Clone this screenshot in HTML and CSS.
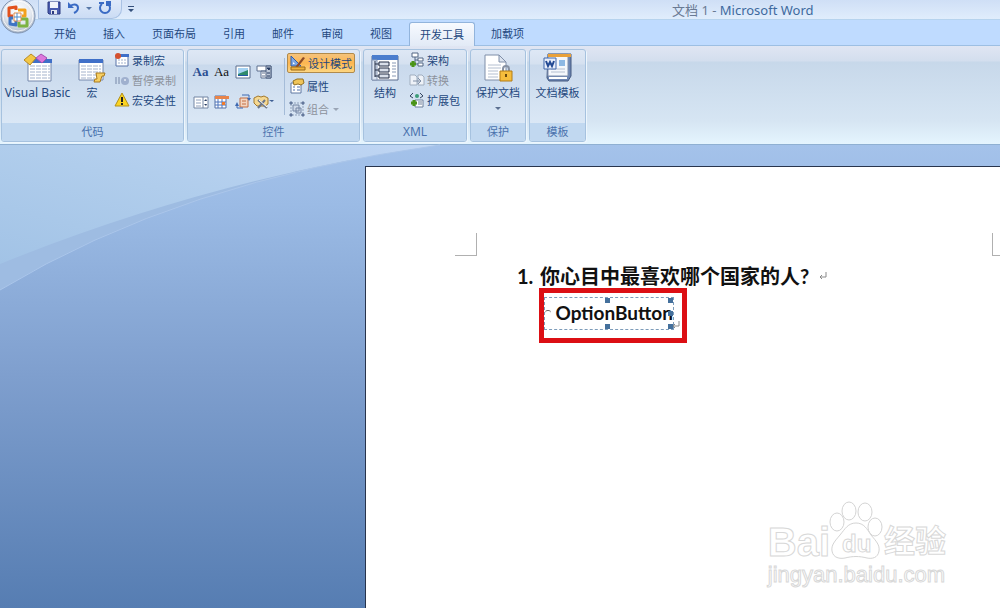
FILE: index.html
```html
<!DOCTYPE html>
<html lang="zh-CN">
<head>
  <meta charset="UTF-8">
  <meta name="viewport" content="width=device-width, initial-scale=1.0">
  <title>文档 1 - Microsoft Word</title>
  <link rel="stylesheet" href="styles.css">
</head>
<body>
  <header class="title-bar">
    <button class="office-button" aria-label="Office">
      <svg width="36" height="36" viewBox="0 0 36 36">
        <defs>
          <radialGradient id="orb" cx="50%" cy="35%" r="65%">
            <stop offset="0" stop-color="#ffffff"/>
            <stop offset="0.6" stop-color="#e3e8ef"/>
            <stop offset="1" stop-color="#a9b5c6"/>
          </radialGradient>
        </defs>
        <circle cx="18" cy="18" r="17" fill="url(#orb)" stroke="#7e92b0"/>
        <circle cx="18" cy="18" r="15" fill="none" stroke="#ffffff" opacity="0.8"/>
        <g fill="none" stroke-width="3" stroke-linejoin="round">
          <path d="M13 18H9v-8l7-1v3" stroke="#e2511b"/>
          <path d="M18 12h7v6h-3" stroke="#f2a11c"/>
          <path d="M13 20h-3v6l6 1v-4" stroke="#3f74c4"/>
          <path d="M21 21h6v7h-8v-4" stroke="#7cb342"/>
        </g>
        <path d="M14 15h7v8h-7z" fill="#fff" stroke="#dd8a4a"/>
        <path d="M17 15v8M14 19h7" stroke="#4c8fd0"/>
      </svg>
    </button>
    <div class="quick-access">
      <button aria-label="保存">
        <svg width="14" height="14" viewBox="0 0 14 14">
          <path d="M1 1h12v12H2l-1-1z" fill="#4a5db0" stroke="#2c3a80"/>
          <path d="M3 1h8v6H3z" fill="#f2f5fc"/>
          <path d="M4 9h6v4H4z" fill="#dfe4f0"/>
          <path d="M5 10h2v3H5z" fill="#2c3a80"/>
        </svg>
      </button>
      <button aria-label="撤消">
        <svg width="13" height="14" viewBox="0 0 13 14">
          <path d="M3 5c5-3 8-1 8 2s-2 4-4 5" fill="none" stroke="#3a6bc4" stroke-width="2"/>
          <path d="M1 1v6h6z" fill="#3a6bc4"/>
        </svg>
      </button>
      <svg class="caret" width="6" height="3" viewBox="0 0 6 3"><path d="M0 0h6L3 3z" fill="#5878a8"/></svg>
      <button aria-label="重复">
        <svg width="14" height="14" viewBox="0 0 14 14">
          <path d="M4 3a5 5 0 1 0 6 0" fill="none" stroke="#3a6bc4" stroke-width="2"/>
          <path d="M8 0h5v5H8z" fill="#3a6bc4"/>
          <path d="M1 2h5" stroke="#3a6bc4" stroke-width="2"/>
        </svg>
      </button>
    </div>
    <button class="customize" aria-label="自定义快速访问工具栏">
      <svg width="6" height="7" viewBox="0 0 6 7"><path d="M0 0h6v1H0zM0 3h6L3 6z" fill="#34507c"/></svg>
    </button>
    <div class="window-title">文档 1 - <span>Microsoft Word</span></div>
  </header>

  <nav class="tabs">
    <button>开始</button>
    <button>插入</button>
    <button>页面布局</button>
    <button>引用</button>
    <button>邮件</button>
    <button>审阅</button>
    <button>视图</button>
    <button class="active">开发工具</button>
    <button>加载项</button>
  </nav>

  <div class="ribbon">
    <section class="group group-code">
      <div class="group-body">
        <button class="big vb">
          <svg width="30" height="30" viewBox="0 0 30 30">
            <path d="M5 7h23v21H5z" fill="#fff" stroke="#7488ac"/>
            <path d="M5 6h24v4H5z" fill="#3f6fc8"/>
            <g stroke="#a3b2cc" stroke-dasharray="5 1"><path d="M7 13h20M7 16h20M7 19h20M7 22h20M7 25h20"/></g>
            <path d="M1 7l7-6 5 4-6 7z" fill="#f3c746" stroke="#b98a22"/>
            <path d="M13 5l5-4 6 4-5 5z" fill="#dc78dc" stroke="#a64fb0"/>
          </svg>
          <span class="latin">Visual Basic</span>
        </button>
        <button class="big macro">
          <svg width="30" height="30" viewBox="0 0 30 30">
            <path d="M2 7h24v20H2z" fill="#fff" stroke="#7488ac"/>
            <path d="M2 6h24v4H2z" fill="#3f6fc8"/>
            <g stroke="#a3b2cc" stroke-dasharray="5 1"><path d="M4 13h20M4 16h20M4 19h20M4 22h20M4 25h14"/></g>
            <path d="M19 20h9l-1 3h-2l-2 6h-6l1-3h2z" fill="#f7cf62" stroke="#a97a1c"/>
          </svg>
          <span>宏</span>
        </button>
        <div class="column">
          <button class="small">
            <svg width="16" height="16" viewBox="0 0 16 16">
              <path d="M2 3h12v11H2z" fill="#fff" stroke="#5873a8"/>
              <path d="M6 2h9v3H6z" fill="#3f6fc8"/>
              <path d="M4 8h9M4 11h9" stroke="#9fb0cc" stroke-dasharray="2 1"/>
              <circle cx="4" cy="4" r="3" fill="#d4502e"/>
            </svg>
            录制宏
          </button>
          <button class="small" disabled>
            <svg width="16" height="16" viewBox="0 0 16 16">
              <path d="M2 5v7M5 5v7" stroke="#a2b2cb" stroke-width="2"/>
              <circle cx="11" cy="9" r="4" fill="#9fb0ce"/>
              <circle cx="11" cy="8" r="1" fill="#e4ebf6"/>
            </svg>
            暂停录制
          </button>
          <button class="small">
            <svg width="16" height="16" viewBox="0 0 16 16">
              <path d="M8 1l7 13H1z" fill="#fbd423" stroke="#b2901c" stroke-linejoin="round"/>
              <path d="M8 5v5M8 11v2" stroke="#222" stroke-width="2"/>
            </svg>
            宏安全性
          </button>
        </div>
      </div>
      <h2>代码</h2>
    </section>

    <section class="group group-controls">
      <div class="group-body">
        <div class="control-grid">
          <button class="rich">Aa</button>
          <button class="plain">Aa</button>
          <button aria-label="图片">
            <svg width="16" height="16" viewBox="0 0 16 16">
              <path d="M1 2h14v12H1z" fill="#fff" stroke="#5c6f8e"/>
              <path d="M3 4h10v8H3z" fill="#a5d2f2"/>
              <path d="M3 10l5-2 5-2v6H3z" fill="#2f8a6c"/>
              <path d="M3 11h10v1H3z" fill="#2456a8"/>
            </svg>
          </button>
          <button aria-label="组合框">
            <svg width="16" height="16" viewBox="0 0 16 16">
              <path d="M1 2h14v5H1zM5 7h10v7H5z" fill="#fff" stroke="#5c6f8e"/>
              <path d="M10 2h5v12h-5z" fill="#bcc7d8" stroke="#4a5c7c"/>
              <path d="M11 4h3l-1 2zM11 9h3M11 12h3" fill="#24395f" stroke="#24395f"/>
              <path d="M6 9h3M6 12h3" stroke="#5c6f8e"/>
            </svg>
          </button>
          <button aria-label="下拉列表">
            <svg width="16" height="16" viewBox="0 0 16 16">
              <path d="M1 3h14v11H1z" fill="#fff" stroke="#7385a3"/>
              <path d="M10 3v11" stroke="#7385a3"/>
              <path d="M3 6h5M3 9h5M3 12h5" stroke="#8fa0bc"/>
              <path d="M11 7l2-2 1 2zM11 10h3l-1 2z" fill="#24395f"/>
            </svg>
          </button>
          <button aria-label="日期选取器">
            <svg width="16" height="16" viewBox="0 0 16 16">
              <path d="M1 2h11v12H1z" fill="#fff" stroke="#5470a5"/>
              <path d="M1 2h14v3H1z" fill="#e8844a"/>
              <path d="M1 8h11M1 11h11M4 5v9M8 5v9" stroke="#4d74bd"/>
              <path d="M8 8h3v3H8z" fill="#f07a2b"/>
            </svg>
          </button>
          <button aria-label="构建基块库">
            <svg width="16" height="16" viewBox="0 0 16 16">
              <path d="M5 4h8v9H5z" fill="#f3d6c2" stroke="#c26c42"/>
              <path d="M7 7h4M7 10h4" stroke="#c26c42"/>
              <path d="M7 1h7v4M2 10v4h6" fill="none" stroke="#3e68b0"/>
              <path d="M12 4h4l-2 3zM0 12l2-4 2 4z" fill="#3e68b0"/>
            </svg>
          </button>
          <button aria-label="旧式工具">
            <svg width="21" height="16" viewBox="0 0 21 16">
              <path d="M1 4l4-2 3 1 3-1 4 2v6l-3 2H4l-3-3z" fill="#f5d891" stroke="#a2782c"/>
              <path d="M5 6l9 8M12 6l-7 8" stroke="#6c7688" stroke-width="2"/>
              <path d="M6 6l8 7" stroke="#fff"/>
              <path d="M16 6h5l-2 2z" fill="#3f5f94"/>
            </svg>
          </button>
        </div>
        <div class="column wide">
          <button class="small pressed">
            <svg width="16" height="16" viewBox="0 0 16 16">
              <path d="M1 1v10h10z" fill="#7ea7e2" stroke="#2f5da8"/>
              <path d="M3 7v2h2z" fill="#fff"/>
              <path d="M6 11l7-9 2 1-7 9-3 1z" fill="#8c4a28"/>
              <path d="M1 12h14v3H1z" fill="#f0b23c" stroke="#9a6a1c"/>
            </svg>
            设计模式
          </button>
          <button class="small">
            <svg width="16" height="16" viewBox="0 0 16 16">
              <path d="M2 5h10v10H2z" fill="#fff" stroke="#6078a2"/>
              <path d="M4 9h2M8 9h3M4 12h2M8 12h3" stroke="#4f70ac"/>
              <path d="M4 3l4-2h6l1 4-3 2-3-1-4 1z" fill="#f0c55a" stroke="#93701f"/>
            </svg>
            属性
          </button>
          <button class="small" disabled>
            <svg width="16" height="16" viewBox="0 0 16 16">
              <path d="M2 2h12v12H2z" fill="none" stroke="#91a1ba" stroke-dasharray="2 1"/>
              <path d="M4 4h6v6H4zM7 7h5v5H7z" fill="#cdd8e8" stroke="#7486a4"/>
              <path d="M1 1h2v2H1zM13 1h2v2h-2zM1 13h2v2H1zM13 13h2v2h-2z" fill="#64799c" stroke="#64799c"/>
            </svg>
            组合
            <svg class="caret" width="6" height="3" viewBox="0 0 6 3"><path d="M0 0h6L3 3z" fill="#9aa5b6"/></svg>
          </button>
        </div>
      </div>
      <h2>控件</h2>
    </section>

    <section class="group group-xml">
      <div class="group-body">
        <button class="big structure">
          <svg width="30" height="30" viewBox="0 0 30 30">
            <path d="M2 3h26v24H2z" fill="#fff" stroke="#5c6f90"/>
            <path d="M2 2h26v5H2z" fill="#4b7dcd"/>
            <path d="M2 7h5v20H2zM22 10h4M22 13h4M22 16h4M22 19h4M22 23h4" fill="#dbe4f2" stroke="#8798b5"/>
            <path d="M5 8v16M5 11h4M5 17h4M5 23h4" fill="none" stroke="#222d44"/>
            <path d="M9 9h10v4H9zM9 15h10v4H9zM9 21h10v4H9z" fill="#d9dfe9" stroke="#222d44"/>
          </svg>
          <span>结构</span>
        </button>
        <div class="column">
          <button class="small">
            <svg width="16" height="16" viewBox="0 0 16 16">
              <path d="M3 1h6v4H3zM9 6h5v3H9zM9 11h5v3H9z" fill="#fff" stroke="#526684"/>
              <path d="M6 5v7h3M6 8h3" fill="none" stroke="#526684"/>
              <path d="M4 9v6M1 12h6" stroke="#4a9418" stroke-width="3"/>
            </svg>
            架构
          </button>
          <button class="small" disabled>
            <svg width="16" height="16" viewBox="0 0 16 16">
              <path d="M1 3h5l2 2v8H1zM9 3h4l2 2v8H9z" fill="#eef2f8" stroke="#a1aebf"/>
              <path d="M4 9h7M9 6l3 3-3 3" fill="none" stroke="#8090a8"/>
            </svg>
            转换
          </button>
          <button class="small">
            <svg width="16" height="16" viewBox="0 0 16 16">
              <path d="M4 1L1 4l3 2M11 1l3 3-3 2" fill="none" stroke="#33445f"/>
              <circle cx="8" cy="4" r="2" fill="#3e9c7a"/>
              <path d="M6 8h8v7H6z" fill="#fff" stroke="#6d7f9b"/>
              <path d="M9 10h4M9 12h4" stroke="#6d7f9b"/>
              <path d="M5 8v6M2 11h6" stroke="#4a9418" stroke-width="3"/>
            </svg>
            扩展包
          </button>
        </div>
      </div>
      <h2 class="latin">XML</h2>
    </section>

    <section class="group group-protect">
      <div class="group-body">
        <button class="big">
          <svg width="30" height="30" viewBox="0 0 30 30">
            <path d="M2 2h14l7 7v18H2z" fill="#fff" stroke="#7f8ea8"/>
            <path d="M16 2v7h7z" fill="#dbe3ef" stroke="#7f8ea8"/>
            <path d="M5 12h13M5 15h13M5 18h10M5 21h10M5 24h10" stroke="#b4bfd0"/>
            <path d="M20 18v-2a3 3 0 0 1 6 0v2" fill="none" stroke="#8792a4" stroke-width="2"/>
            <path d="M17 18h12v10H17z" fill="#f6bd3c" stroke="#b27d16"/>
            <path d="M23 21v3" stroke="#6b4a0c" stroke-width="2"/>
          </svg>
          <span>保护文档</span>
          <svg class="caret" width="6" height="3" viewBox="0 0 6 3"><path d="M0 0h6L3 3z" fill="#5b6f90"/></svg>
        </button>
      </div>
      <h2>保护</h2>
    </section>

    <section class="group group-template">
      <div class="group-body">
        <button class="big">
          <svg width="30" height="30" viewBox="0 0 30 30">
            <path d="M5 1h23v22l-3 5H6l-2-3z" fill="#6c86b4" stroke="#44597f"/>
            <path d="M5 1h20v22H5z" fill="#f4f7fc" stroke="#8090ad"/>
            <path d="M5 1h23v3H5z" fill="#e9a13a"/>
            <path d="M6 25h18" stroke="#fff" stroke-width="2"/>
            <path d="M16 7h6v6h-6z" fill="#8db8e4"/>
            <path d="M8 16h14M8 19h14" stroke="#b4bfd0"/>
            <path d="M1 5h12v11H1z" fill="#e8eefa" stroke="#3f66ab"/>
            <path d="M3 8l2 5 2-4 2 4 2-5" fill="none" stroke="#234a94" stroke-width="2"/>
          </svg>
          <span>文档模板</span>
        </button>
      </div>
      <h2>模板</h2>
    </section>
  </div>

  <main class="workspace">
    <svg class="swoosh" width="440" height="146" viewBox="0 0 440 146">
      <defs>
        <linearGradient id="sky" x1="0" y1="1" x2="1" y2="0">
          <stop offset="0" stop-color="#a2c3e6"/>
          <stop offset="0.5" stop-color="#b0cdec"/>
          <stop offset="1" stop-color="#c0d6f4"/>
        </linearGradient>
      </defs>
      <path d="M0 0H440Q180 36 0 145z" fill="#9ebce2"/>
      <path d="M0 0H440Q215 32 0 119z" fill="url(#sky)"/>
      <path d="M440 0Q180 36 0 145" fill="none" stroke="#abc6ea"/>
    </svg>
    <article class="page">
      <div class="question">
        <span class="number">1.</span>
        <span class="question-text">你心目中最喜欢哪个国家的人?</span>
        <svg width="8" height="8" viewBox="0 0 8 8"><path d="M7 0v5H1M3 3L1 5l2 2" fill="none" stroke="#8a8a8a"/></svg>
      </div>
      <div class="highlight">
        <label class="option">
          <input type="radio" name="option">
          OptionButton
          <i class="handle top"></i>
          <i class="handle top right"></i>
          <i class="handle middle right"></i>
          <i class="handle bottom"></i>
          <i class="handle bottom right"></i>
        </label>
        <svg class="mark" width="8" height="8" viewBox="0 0 8 8"><path d="M7 0v5H1M3 3L1 5l2 2" fill="none" stroke="#8a8a8a"/></svg>
      </div>
      <span class="crop crop-left"></span>
      <span class="crop crop-right"></span>
    </article>
    <div class="watermark">
      <div class="brand">
        <span>Bai</span>
        <span class="paw">
          <svg width="54" height="60" viewBox="0 0 54 60" fill="#fff" stroke="#d4d4d4">
            <ellipse cx="7" cy="20" rx="7" ry="9"/>
            <ellipse cx="19" cy="9" rx="7" ry="9"/>
            <ellipse cx="35" cy="10" rx="7" ry="9"/>
            <ellipse cx="45" cy="25" rx="7" ry="9"/>
            <path d="M26 21c8 0 11 6 15 12 5 6 9 10 8 16-1 7-7 8-12 7-8-2-14-2-22 0-5 1-12 0-13-7-1-6 3-10 8-16 5-6 8-12 16-12z"/>
          </svg>
          <b>du</b>
        </span>
        <span class="cn">经验</span>
      </div>
      <div class="site">jingyan.baidu.com</div>
    </div>
  </main>
</body>
</html>
```
FILE: styles.css
```css
* {
  box-sizing: border-box;
}

body {
  margin: 0;
  min-height: 100vh;
  display: flex;
  flex-direction: column;
  overflow: hidden;
  font-family: "Noto Sans", "Noto Sans CJK SC", sans-serif;
  font-size: 11px;
  color: #24487e;
}

button {
  margin: 0;
  padding: 0;
  border: none;
  background: none;
  font: inherit;
  color: inherit;
  white-space: nowrap;
}

svg {
  display: block;
  flex: none;
  overflow: visible;
}

/* title bar */
.title-bar {
  position: relative;
  height: 20px;
  display: flex;
  align-items: center;
  padding-left: 38px;
  background: linear-gradient(#cfdff6, #e0edfc);
  border-bottom: 1px solid #b6d3ee;
}

.office-button {
  position: absolute;
  left: 0;
  top: -2px;
  z-index: 2;
}

.quick-access {
  width: 84px;
  height: 19px;
  padding: 0 10px 2px 8px;
  display: flex;
  align-items: center;
  gap: 6px;
  border: 1px solid #a9c2e4;
  border-top: none;
  border-radius: 0 0 10px 0;
  background: linear-gradient(#dfeafa, #cbdcf4);
}

.customize {
  margin-left: 6px;
}

.window-title {
  margin-left: 538px;
  font-size: 13px;
  line-height: 18px;
  color: #6a7a93;
  white-space: nowrap;
}

.window-title span {
  color: #3e6a9e;
}

/* tabs */
.tabs {
  height: 26px;
  display: flex;
  align-items: flex-end;
  gap: 1px;
  padding-left: 41px;
  background: #bfdbff;
  border-bottom: 1px solid #9dbfe3;
}

.tabs button {
  height: 23px;
  padding: 0 13px;
  line-height: 22px;
}

.tabs .active {
  margin: 0 2px -1px 3px;
  padding: 0 10px;
  height: 24px;
  border: 1px solid #92b4dc;
  border-bottom: none;
  border-radius: 3px 3px 0 0;
  background: linear-gradient(#f7faff, #e2eaf6);
}

/* ribbon */
.ribbon {
  display: flex;
  gap: 3px;
  height: 99px;
  padding: 3px 1px;
  background: linear-gradient(#e0e6f3 0, #d3deee 15px, #c7d8ea 16px, #d6e5f3 75px, #e4f4fe 97px);
  border-bottom: 1px solid #8fb0d2;
}

.group {
  flex: none;
  height: 93px;
  border: 1px solid #a6c2df;
  border-radius: 3px;
  background: linear-gradient(#dee8f5 0, #d5e1f0 14px, #c9d9ec 15px, #dbe8f6 75px);
  box-shadow: 1px 1px 0 #edf6fd;
  overflow: hidden;
}

.group h2 {
  margin: 0;
  height: 18px;
  font-size: 11px;
  font-weight: normal;
  line-height: 17px;
  text-align: center;
  color: #4a72ad;
  background: #c1d8f0;
}

.latin,
.group .latin {
  font-size: 12px;
}

.group-body {
  height: 73px;
  display: flex;
}

.group-code {
  width: 183px;
}

.group-controls {
  width: 173px;
}

.group-xml {
  width: 104px;
}

.group-protect {
  width: 56px;
}

.group-template {
  width: 57px;
}

.big {
  flex: 1;
  display: flex;
  flex-direction: column;
  align-items: center;
  padding-top: 3px;
  line-height: 20px;
}

.vb {
  flex: 0 0 71px;
}

.macro {
  flex: 0 0 38px;
}

.structure {
  flex: 0 0 42px;
}

.big .caret {
  margin-top: 4px;
}

.column {
  display: flex;
  flex-direction: column;
  padding-left: 3px;
}

.small {
  height: 20px;
  display: flex;
  align-items: center;
  gap: 2px;
}

.small:disabled {
  color: #8c929c;
}

.small .caret {
  margin-left: 2px;
}

.control-grid {
  flex: 0 0 97px;
  margin: 8px 0;
  padding-left: 2px;
  display: grid;
  grid-template-columns: repeat(4, 21px);
  grid-template-rows: 27px 34px;
  align-items: center;
  border-right: 1px solid #a5bcd8;
}

.control-grid button {
  width: 21px;
  display: flex;
  justify-content: center;
}

.control-grid .rich,
.control-grid .plain {
  font-family: "Liberation Serif", serif;
  font-size: 13px;
  font-weight: bold;
  color: #2b4f92;
}

.control-grid .plain {
  font-weight: normal;
  color: #111;
}

.wide {
  padding: 3px 0 0 2px;
  gap: 3px;
}

.wide .small {
  padding: 0 2px;
}

.pressed {
  border: 1px solid #b08a4c;
  border-radius: 2px;
  background: linear-gradient(#f5c37c, #fdb650 50%, #fdd681);
}

/* document area */
.workspace {
  position: relative;
  flex: 1;
  display: flex;
  padding: 21px 0 0 365px;
  background: linear-gradient(#a4c2ea, #9bbbe5 60px, #7f9fce 230px, #567db2);
}

.swoosh {
  position: absolute;
  left: 0;
  top: 0;
}

.page {
  position: relative;
  flex: 1;
  padding: 97px 0 0 151px;
  border: solid #28344c;
  border-width: 1px 0 0 1px;
  background: #fff;
  color: #111;
}

.question {
  display: flex;
  align-items: center;
  height: 24px;
  font-family: Lato, "Noto Sans CJK SC", sans-serif;
  font-size: 20px;
  font-weight: bold;
  line-height: 24px;
}

.number {
  width: 23px;
}

.question-text {
  margin-right: 10px;
}

.highlight {
  position: relative;
  width: 148px;
  height: 55px;
  margin-left: 22px;
  padding: 4px 0 0;
  border: 5px solid #dc0f14;
}

.option {
  position: relative;
  width: 130px;
  height: 33px;
  display: flex;
  align-items: center;
  padding-bottom: 2px;
  border: 1px dashed #7d9cba;
  font-family: Lato, sans-serif;
  font-size: 19px;
  font-weight: bold;
}

/* only the top arc of the radio shows in design mode */
.option input {
  appearance: none;
  width: 6px;
  height: 6px;
  margin: 0 5px 0 0;
  border-top: 1px solid #666;
  border-radius: 50%;
}

.handle {
  position: absolute;
  left: 60px;
  width: 5px;
  height: 5px;
  background: #44709c;
}

.handle.top {
  top: 0;
}

.handle.middle {
  top: 13px;
}

.handle.bottom {
  bottom: 0;
}

.handle.right {
  left: auto;
  right: 0;
}

.mark {
  position: absolute;
  right: 2px;
  bottom: 9px;
}

.crop {
  position: absolute;
  top: 66px;
  width: 22px;
  height: 23px;
  border-bottom: 1px solid #b0b0b0;
}

.crop-left {
  left: 89px;
  border-right: 1px solid #b0b0b0;
}

.crop-right {
  right: -14px;
  border-left: 1px solid #b0b0b0;
}

/* watermark over the page */
.watermark {
  position: absolute;
  right: 54px;
  bottom: 20px;
  color: #fff;
  font-family: "Liberation Sans", "Noto Sans CJK SC", sans-serif;
  -webkit-text-stroke: 1px #d8d8d8;
}

.brand {
  display: flex;
  align-items: flex-end;
  height: 62px;
  font-size: 40px;
  font-weight: bold;
  line-height: 40px;
}

.paw {
  position: relative;
}

.paw b {
  position: absolute;
  left: 12px;
  bottom: 4px;
  font-size: 24px;
  line-height: 28px;
}

.cn {
  font-size: 31px;
}

.site {
  font-size: 22px;
  line-height: 26px;
}
```
